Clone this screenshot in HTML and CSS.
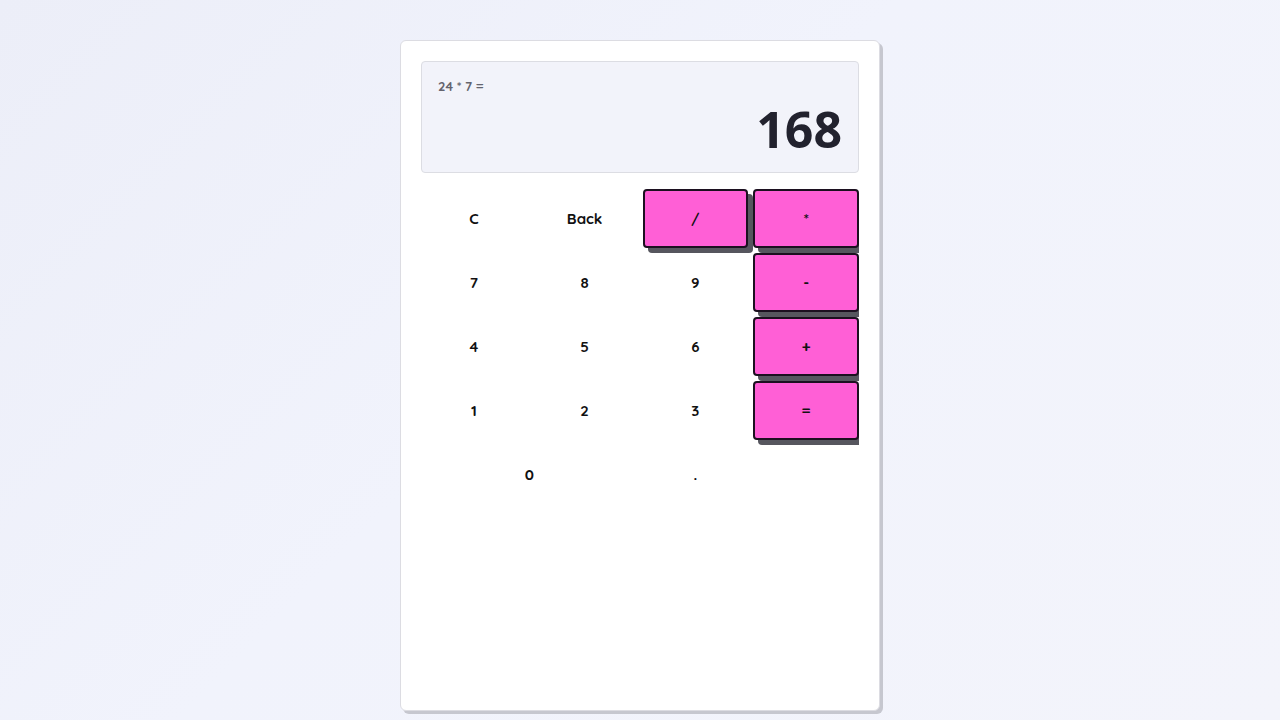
FILE: index.html
```html
<!DOCTYPE html>
<html>
<head>
    <title>Calculator</title>
    <link rel="stylesheet" href="styles.css">
</head>
<body>
    <div class="calculator">
        <div class="display">
            <div class="expression">24 * 7 =</div>
            <div class="result">168</div>
        </div>

        <div class="keys">
            <button>C</button>
            <button>Back</button>
            <button class="op">/</button>
            <button class="op">*</button>
            <button>7</button>
            <button>8</button>
            <button>9</button>
            <button class="op">-</button>
            <button>4</button>
            <button>5</button>
            <button>6</button>
            <button class="op">+</button>
            <button>1</button>
            <button>2</button>
            <button>3</button>
            <button class="op">=</button>
            <button class="zero">0</button>
            <button>.</button>
        </div>
    </div>
</body>
</html>
```

FILE: styles.css
```css
/* Page */
body {
    margin: 0;
    min-height: 100vh;
    font-family: "Quicksand", "Lato", sans-serif;
    background: linear-gradient(135deg, #eceef8 0%, #f1f3fc 45%, #f3f4fb 100%);
}

.calculator {
    width: 438px;
    height: 629px;
    margin: 40px auto 0;
    padding: 20px;
    background-color: #fff;
    border: 1px solid #dcdce2;
    border-radius: 6px;
    box-shadow: 3px 3px 0 #c6c7cf;
}

/* Screen */
.display {
    height: 94px;
    padding: 16px 16px 0 16px;
    margin-bottom: 16px;
    background-color: #f2f3fa;
    border: 1px solid #dcdde3;
    border-radius: 4px;
}

.expression {
    font-size: 13px;
    font-weight: 700;
    color: #64646e;
    line-height: 16px;
}

.result {
    font-family: "Open Sans", sans-serif;
    font-size: 50px;
    font-weight: 700;
    color: #22222e;
    text-align: right;
    line-height: 60px;
    margin-top: 5px;
}

/* Keypad */
.keys {
    display: grid;
    grid-template-columns: repeat(4, 1fr);
    grid-auto-rows: 59px;
    gap: 5px;
    padding-bottom: 6px;
    overflow: hidden;
}

.keys button {
    font-family: inherit;
    font-size: 15px;
    font-weight: 700;
    color: #111;
    background: none;
    border: none;
    cursor: pointer;
}

.keys .zero {
    grid-column: span 2;
}

.keys .op {
    background-color: #ff5fd6;
    border: 2px solid #1c1020;
    border-radius: 4px;
    box-shadow: 5px 5px 0 #56565e;
}
```
